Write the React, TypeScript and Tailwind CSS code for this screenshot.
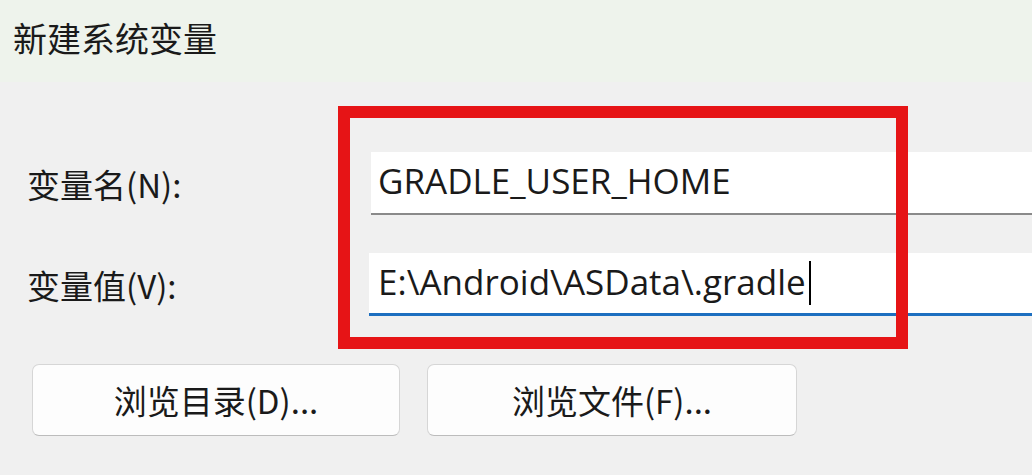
import React from "react";

const cjk = { fontFamily: '"Noto Sans CJK SC", "Open Sans", sans-serif' };
const latin = { fontFamily: '"Open Sans", "Noto Sans CJK SC", sans-serif' };

export default function App() {
  return (
    <div className="relative w-[1032px] h-[475px] overflow-hidden bg-[#f0f0f0] text-[#1a1a1a]">
      <div className="h-[82px] bg-[#eef3ec] flex items-center pl-[13px] pb-[6px]">
        <span className="text-[34px] leading-none" style={cjk}>新建系统变量</span>
      </div>

      <div className="flex flex-col pt-[70px]">
        <div className="flex items-center h-[63px]">
          <div className="w-[371px] pl-[27px] text-[33px] leading-none pt-[2px]" style={cjk}>变量名(N):</div>
          <div className="flex-1 h-[63px] bg-white border-b-2 border-[#8a8a8a] flex items-center pl-[7px]">
            <span className="text-[35px] leading-none text-[#1a1a1a] -mt-[4px]" style={latin}>GRADLE_USER_HOME</span>
          </div>
        </div>

        <div className="flex items-center h-[63px] mt-[38px]">
          <div className="w-[369px] pl-[27px] text-[33px] leading-none pt-[2px]" style={cjk}>变量值(V):</div>
          <div className="flex-1 h-[63px] bg-white border-b-[3px] border-[#1d6fc0] flex items-center pl-[9px]">
            <span className="text-[35px] leading-none text-[#1a1a1a] -mt-[4px]" style={latin}>E:\Android\ASData\.gradle</span>
            <span className="w-[2px] h-[44px] bg-black ml-[3px]" />
          </div>
        </div>

        <div className="flex gap-[27px] pl-[32px] mt-[48px]">
          <button className="w-[368px] h-[72px] rounded-[7px] bg-[#fdfdfd] border border-[#d6d6d6] border-b-[#bcbcbc] flex items-center justify-center text-[33px] leading-none text-[#1a1a1a]" style={cjk}>
            浏览目录(D)...
          </button>
          <button className="w-[370px] h-[72px] rounded-[7px] bg-[#fdfdfd] border border-[#d6d6d6] border-b-[#bcbcbc] flex items-center justify-center text-[33px] leading-none text-[#1a1a1a]" style={cjk}>
            浏览文件(F)...
          </button>
        </div>
      </div>

      <div className="absolute left-[338px] top-[106px] w-[570px] h-[243px] border-[12px] border-[#e61416]" />
    </div>
  );
}
